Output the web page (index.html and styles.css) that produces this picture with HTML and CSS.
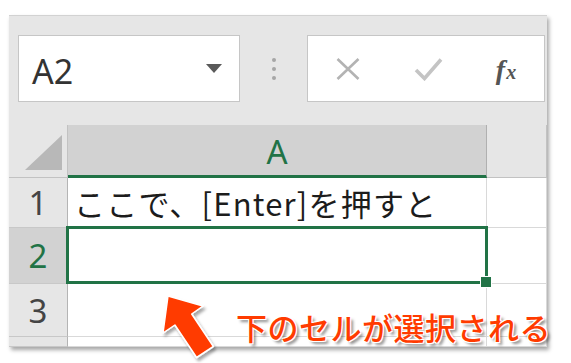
FILE: index.html
```html
<!DOCTYPE html>
<html lang="ja">
<head>
<meta charset="utf-8">
<link rel="stylesheet" href="styles.css">
</head>
<body>
<div class="frame">
  <div class="toolbar">
    <div class="namebox">
      <span class="name">A2</span>
      <span class="caret"></span>
    </div>
    <div class="dots"><i></i><i></i><i></i></div>
    <div class="fbox">
      <div class="slot">
        <svg width="24" height="22" viewBox="0 0 24 22"><path d="M1.5 1 L22.5 21 M22.5 1 L1.5 21" stroke="#b3b3b3" stroke-width="2.6" fill="none"/></svg>
      </div>
      <div class="slot">
        <svg width="29" height="24" viewBox="0 0 29 24"><path d="M2 13 L10.5 21.5 L27 2.5" stroke="#c4c4c4" stroke-width="3.6" fill="none"/></svg>
      </div>
      <div class="slot"><span class="fx">f<span class="fx-x">x</span></span></div>
    </div>
  </div>
  <div class="grid">
    <div class="corner"><span class="tri"></span></div>
    <div class="colhead sel-col">A</div>
    <div class="colhead">&nbsp;</div>

    <div class="rowhead">1</div>
    <div class="cell text">ここで、[Enter]を押すと</div>
    <div class="cell"></div>

    <div class="rowhead sel-row">2</div>
    <div class="cell active"><div class="selbox"><span class="handle"></span></div></div>
    <div class="cell"></div>

    <div class="rowhead">3</div>
    <div class="cell"></div>
    <div class="cell"></div>

    <div class="rowhead"></div>
    <div class="cell"></div>
    <div class="cell"></div>
  </div>
</div>

<svg class="arrow" width="571" height="363" viewBox="0 0 571 363">
  <defs>
    <filter id="sh" x="-30%" y="-30%" width="160%" height="160%">
      <feDropShadow dx="2" dy="3" stdDeviation="1.8" flood-color="#000" flood-opacity="0.35"/>
    </filter>
  </defs>
  <polygon points="168,296 203,306 191.7,314 213.4,346.5 196.6,357.5 174.9,325 163,333" fill="#ff3b00" stroke="#fff" stroke-width="1.5" stroke-linejoin="round" filter="url(#sh)"/>
</svg>
<div class="note">下のセルが選択される</div>
</body>
</html>
```

FILE: styles.css
```css
html, body {
  margin: 0;
  padding: 0;
  background: #ffffff;
}
body {
  width: 571px;
  height: 363px;
  overflow: hidden;
  position: relative;
  font-family: "Noto Sans", "Noto Sans CJK JP", sans-serif;
}
.frame {
  margin: 15px 0 0 9px;
  width: 538px;
  height: 332px;
  background: #e6e6e6;
  box-shadow: 2px 3px 4px rgba(0, 0, 0, 0.35);
  overflow: hidden;
}
.toolbar {
  height: 110px;
  box-sizing: border-box;
  border-top: 1px solid #d2d2d2;
  padding: 19px 0 0 9px;
  display: flex;
  align-items: flex-start;
}
.namebox {
  width: 222px;
  height: 67px;
  box-sizing: border-box;
  background: #fff;
  border: 1px solid #c6c6c6;
  display: flex;
  align-items: center;
  justify-content: space-between;
  padding: 0 17px 0 13px;
}
.name {
  font-size: 34px;
  color: #333;
  line-height: 1;
  margin-top: 4px;
}
.caret {
  width: 0;
  height: 0;
  border-left: 8.5px solid transparent;
  border-right: 8.5px solid transparent;
  border-top: 9px solid #5a5a5a;
  margin-top: -1px;
}
.dots {
  width: 67px;
  height: 67px;
  display: flex;
  flex-direction: column;
  align-items: center;
  justify-content: center;
  gap: 5px;
}
.dots i {
  display: block;
  width: 4px;
  height: 4px;
  border-radius: 50%;
  background: #a6a6a6;
}
.fbox {
  width: 238px;
  height: 67px;
  box-sizing: border-box;
  background: #fff;
  border: 1px solid #c6c6c6;
  display: flex;
  align-items: center;
}
.slot {
  width: 80px;
  height: 100%;
  display: flex;
  align-items: center;
  justify-content: center;
}
.slot:last-child {
  width: 76px;
}
.fx {
  font-family: "Liberation Serif", serif;
  font-style: italic;
  font-weight: bold;
  font-size: 28px;
  color: #555;
  line-height: 1;
  margin-top: 2px;
}
.fx-x {
  font-size: 20px;
  margin-left: 1px;
}
.grid {
  display: grid;
  grid-template-columns: 59px 419px 60px;
  grid-template-rows: 53px 50px 56px 53px 10px;
  background: #fff;
}
.corner {
  background: #e6e6e6;
  border-right: 1px solid #c2c2c2;
  border-bottom: 1px solid #c2c2c2;
  position: relative;
}
.tri {
  position: absolute;
  left: 16px;
  top: 10px;
  width: 0;
  height: 0;
  border-left: 37px solid transparent;
  border-bottom: 35px solid #b8b8b8;
}
.colhead {
  background: #e6e6e6;
  border-right: 1px solid #c2c2c2;
  border-bottom: 1px solid #c2c2c2;
  display: flex;
  align-items: center;
  justify-content: center;
  font-size: 33px;
  color: #444;
  line-height: 1;
}
.colhead.sel-col {
  background: #d2d2d2;
  color: #217346;
  border-bottom: 3px solid #217346;
  border-right: 1px solid #b0b0b0;
  padding-top: 2px;
  box-sizing: border-box;
}
.rowhead {
  background: #e6e6e6;
  border-right: 1px solid #b4b4b4;
  border-bottom: 1px solid #c8c8c8;
  display: flex;
  align-items: center;
  justify-content: center;
  font-size: 33px;
  color: #444;
  line-height: 1;
}
.rowhead.sel-row {
  background: #d2d2d2;
  color: #217346;
}
.cell {
  background: #fff;
  border-right: 1px solid #d9d9d9;
  border-bottom: 1px solid #d9d9d9;
  position: relative;
}
.cell.active {
  z-index: 2;
}
.cell.text {
  font-family: "Noto Sans CJK JP", sans-serif;
  font-size: 31px;
  letter-spacing: 1.2px;
  color: #1c1c1c;
  display: flex;
  align-items: center;
  padding-left: 6px;
  white-space: nowrap;
  line-height: 1;
}
.selbox {
  position: absolute;
  left: -2px;
  top: -2px;
  right: -2px;
  bottom: -1px;
  border: 3px solid #217346;
}
.handle {
  position: absolute;
  right: -7px;
  bottom: -7px;
  width: 10px;
  height: 10px;
  background: #217346;
  border: 1px solid #fff;
}
.arrow {
  position: absolute;
  left: 0;
  top: 0;
  pointer-events: none;
}
.note {
  position: absolute;
  left: 236px;
  top: 311px;
  font-family: "Noto Sans CJK JP", sans-serif;
  font-weight: 500;
  font-size: 31px;
  line-height: 31px;
  letter-spacing: 0.5px;
  color: #ff3b00;
  white-space: nowrap;
  text-shadow: -1px -1px 0 #fff, 1px -1px 0 #fff, -1px 1px 0 #fff, 1px 1px 0 #fff, 3px 3px 3px rgba(0, 0, 0, 0.45);
}
```
